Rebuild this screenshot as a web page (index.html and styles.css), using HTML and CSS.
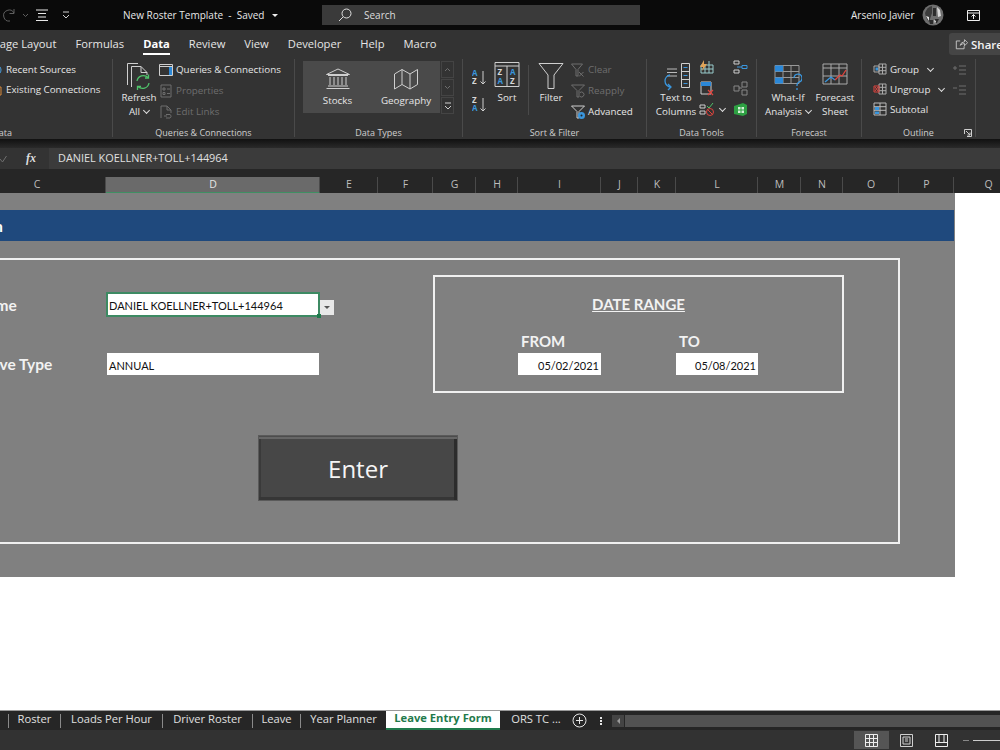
FILE: index.html
```html
<!DOCTYPE html>
<html lang="en">
<head>
  <meta charset="UTF-8">
  <meta name="viewport" content="width=device-width, initial-scale=1.0">
  <title>New Roster Template</title>
  <link rel="stylesheet" href="styles.css">
</head>

<body>
  <div class="app">
    <!-- title bar -->
    <header class="titlebar">
      <div class="quick">
        <svg class="ic dim" width="14" height="14" viewBox="0 0 14 14"><path d="M12 5A5.5 5.5 0 1 0 8 13"/><path d="M12 1v4.500H7.500"/></svg>
        <svg class="ic dim chev-1" width="7" height="5" viewBox="0 0 7 5"><path d="M1 1l2.500 2.500L6 1"/></svg>
        <svg class="ic menu-lines" width="14" height="13" viewBox="0 0 14 13"><path d="M1 1h12M3 4.500h8M3 8h8M1 11.500h12" stroke="#e8e8e8"/></svg>
        <svg class="ic chev-2" width="8" height="8" viewBox="0 0 8 8"><path d="M1 1h6M1 4l3 3 3-3"/></svg>
      </div>
      <div class="doc-name">New Roster Template&nbsp; - &nbsp;Saved<span class="caret"></span></div>
      <div class="search">
        <svg class="ic" width="14" height="14" viewBox="0 0 14 14"><circle cx="8.500" cy="5.500" r="4.500" stroke="#e0e0e0"/><path d="M5.200 8.800L1 13" stroke="#e0e0e0"/></svg>
        <span>Search</span>
      </div>
      <div class="user">Arsenio Javier</div>
      <svg class="avatar" width="22" height="22" viewBox="0 0 22 22">
        <circle cx="11" cy="11" r="10.500" fill="#6e6e6e"/>
        <path d="M3 9q2-6 7-7v7l-3 9q-3-3-4-9z" fill="#3c3c3c"/>
        <path d="M15 3l3 3 1 6-3 1z" fill="#d8d8d8"/>
        <path d="M11 4h3v8h-3zM7 16h4v4H8zM13 15h4l-2 4h-2z" fill="#2c2c2c"/>
        <path d="M4 12l3 1v4zM12 16l2 1-1 3z" fill="#e6e6e6"/>
      </svg>
      <svg class="ic restore" width="13" height="11" viewBox="0 0 13 11"><path d="M.5.500h12v10H.500zM.5 3h12M6.500 9V4.500M4.500 6.500l2-2 2 2" stroke="#eee"/></svg>
    </header>

    <!-- ribbon tabs -->
    <nav class="menu">
      <a class="menu-item">Page Layout</a>
      <a class="menu-item">Formulas</a>
      <a class="menu-item active">Data</a>
      <a class="menu-item">Review</a>
      <a class="menu-item">View</a>
      <a class="menu-item">Developer</a>
      <a class="menu-item">Help</a>
      <a class="menu-item">Macro</a>
      <div class="share">
        <svg class="ic" width="13" height="12" viewBox="0 0 15 13"><path d="M6 3H1.500v9h9V9M6 8q1-4 5-4V1.500L14.500 5 11 8.500V6q-3 0-5 2z"/></svg>
        <span>Share</span>
      </div>
    </nav>

    <!-- ribbon -->
    <section class="ribbon">
      <div class="group group-get">
        <div class="body">
          <div class="list list-tight">
            <div class="row">
              <svg class="ic" width="14" height="14" viewBox="0 0 14 14"><circle cx="7" cy="8" r="5" stroke="#4a9fe0"/></svg>
              <span>Recent Sources</span>
            </div>
            <div class="row">
              <svg class="ic" width="14" height="14" viewBox="0 0 14 14"><path d="M3 5h9v8H3zM5 5V2h5v3" stroke="#d98a3d"/></svg>
              <span>Existing Connections</span>
            </div>
          </div>
        </div>
        <div class="group-label">Get &amp; Transform Data</div>
      </div>

      <div class="group group-queries">
        <div class="body">
          <div class="big refresh">
            <svg class="ic" width="28" height="29" viewBox="0 0 28 29">
              <path d="M2.500 23V1.500H13"/>
              <path d="M6.500 25V4.500H16l6 6V13M16 4.500v6h6"/>
              <path d="M12 19a6.500 6.500 0 0 1 11-3.500M24 21a6.500 6.500 0 0 1-11 3.500" stroke="#4fc36a" stroke-width="1.300"/>
              <path d="M23.500 12.500v3.500H20M12.500 28v-3.500H16" stroke="#4fc36a" stroke-width="1.300"/>
            </svg>
            <span>Refresh</span>
            <span>All<i class="chev"></i></span>
          </div>
          <div class="list">
            <div class="row">
              <svg class="ic" width="14" height="14" viewBox="0 0 14 14"><path d="M.5 1.500h13v11H.500zM.5 3.500h13"/><path d="M10 4h3v8h-3z" fill="#2b88d8" stroke="none"/></svg>
              <span>Queries &amp; Connections</span>
            </div>
            <div class="row off">
              <svg class="ic off-ic" width="14" height="14" viewBox="0 0 14 14"><path d="M2 1h10v12H2zM4 4h2v2H4zM4 8.500h2v2H4zM8 5h3M8 9.500h3"/></svg>
              <span>Properties</span>
            </div>
            <div class="row off">
              <svg class="ic off-ic" width="14" height="14" viewBox="0 0 14 14"><path d="M2 13V1h6l4 4v3M8 1v4h4M5 11h3M7 9.500h4a2 2 0 0 1 0 3.500H7"/></svg>
              <span>Edit Links</span>
            </div>
          </div>
        </div>
        <div class="group-label">Queries &amp; Connections</div>
      </div>

      <div class="group group-types">
        <div class="body">
          <div class="gallery">
            <div class="type type-stocks">
              <svg class="ic" width="26" height="22" viewBox="0 0 26 22"><path d="M13 1L1.500 6.500h23zM3 7.500h20M5 9v8M9 9v8M13 9v8M17 9v8M21 9v8M3 18h20M1.500 20.500h23"/></svg>
              <span>Stocks</span>
            </div>
            <div class="type">
              <svg class="ic" width="26" height="22" viewBox="0 0 26 22"><path d="M1.500 6L9 1.500l8 4.500 7.500-4.500v15L17 21l-8-4.500L1.500 21zM9 1.500v15M17 6v15"/></svg>
              <span>Geography</span>
            </div>
          </div>
          <div class="scroller">
            <div class="scroll-cell"><svg class="ic off-ic" width="7" height="5" viewBox="0 0 7 5"><path d="M1 4l2.500-2.500L6 4"/></svg></div>
            <div class="scroll-cell"><svg class="ic off-ic" width="7" height="5" viewBox="0 0 7 5"><path d="M1 1l2.500 2.500L6 1"/></svg></div>
            <div class="scroll-cell"><svg class="ic" width="8" height="8" viewBox="0 0 8 8"><path d="M1 1h6M1 4l3 3 3-3"/></svg></div>
          </div>
        </div>
        <div class="group-label">Data Types</div>
      </div>

      <div class="group group-sort">
        <div class="body">
          <div class="sort-small">
            <svg class="ic" width="15" height="16" viewBox="0 0 15 16">
              <text x="0" y="7" class="letter blue-text">A</text><text x="0" y="15" class="letter">Z</text>
              <path d="M11 2v13M8.500 12.500L11 15l2.500-2.500"/>
            </svg>
            <svg class="ic" width="15" height="16" viewBox="0 0 15 16">
              <text x="0" y="7" class="letter">Z</text><text x="0" y="15" class="letter blue-text">A</text>
              <path d="M11 2v13M8.500 12.500L11 15l2.500-2.500"/>
            </svg>
          </div>
          <div class="big sort-btn">
            <svg class="ic" width="26" height="29" viewBox="0 0 26 29">
              <path d="M1 .500h24v24H1zM1 4h24M13 4v20.500"/>
              <text x="3.500" y="13" class="letter">Z</text><text x="3.500" y="22" class="letter blue-text">A</text>
              <text x="16" y="13" class="letter blue-text">A</text><text x="16" y="22" class="letter">Z</text>
            </svg>
            <span>Sort</span>
          </div>
          <div class="vline"></div>
          <div class="big filter-btn">
            <svg class="ic" width="26" height="29" viewBox="0 0 26 29"><path d="M1 1.500h24L16 13v13.500h-6V13z"/></svg>
            <span>Filter</span>
          </div>
          <div class="list">
            <div class="row off">
              <svg class="ic off-ic" width="14" height="14" viewBox="0 0 14 14"><path d="M.5 1h11L7 6.500V13H5V6.500zM8 9l4.500 4.500M12.500 9L8 13.500"/></svg>
              <span>Clear</span>
            </div>
            <div class="row off">
              <svg class="ic off-ic" width="14" height="14" viewBox="0 0 14 14"><path d="M.5 1h13L8 6.500V13H6V6.500zM9 8.500a2.500 2.500 0 1 1 0 4"/></svg>
              <span>Reapply</span>
            </div>
            <div class="row">
              <svg class="ic" width="14" height="14" viewBox="0 0 14 14"><path d="M.5 1h13L8 6.500V13H6V6.500z"/><circle cx="10.500" cy="10.500" r="3.500" fill="#3a96dd" stroke="none"/><circle cx="10.500" cy="10.500" r="1" fill="#222" stroke="none"/></svg>
              <span>Advanced</span>
            </div>
          </div>
        </div>
        <div class="group-label">Sort &amp; Filter</div>
      </div>

      <div class="group group-tools">
        <div class="body">
          <div class="big columns-btn">
            <svg class="ic" width="30" height="29" viewBox="0 0 30 29">
              <path d="M6 7h10M6 10.500h10M6 14h10" stroke="#bbb"/>
              <path d="M20.500 1.500h8v24h-8zM20.500 9.500h8M20.500 17.500h8"/>
              <path d="M22.500 5.500h4M22.500 13.500h4M22.500 21.500h4" stroke="#3a96dd"/>
              <path d="M9 13a6 6 0 0 0-5 6 6 6 0 0 0 6 6M7 22l3 3-3 3" stroke="#3a96dd" stroke-width="1.300"/>
            </svg>
            <span>Text to</span>
            <span>Columns</span>
          </div>
          <div class="tool-col">
            <svg class="ic" width="15" height="14" viewBox="0 0 15 14"><path d="M2 13V5h12v8zM6 5v8M10 1v12M2 9h12" stroke="#9cc"/><path d="M5 0L1 7h3l-1 4 5-7H5z" fill="#e0a458" stroke="none"/></svg>
            <svg class="ic" width="15" height="15" viewBox="0 0 15 15"><path d="M2 1h10v12H2z"/><path d="M2 1h10v4H2z" fill="#2b88d8" stroke="none"/><path d="M9 9l5 5M14 9l-5 5" stroke="#e0443e" stroke-width="1.300"/></svg>
            <div class="tool-row">
              <svg class="ic" width="15" height="14" viewBox="0 0 15 14"><path d="M1 3h5v3H1zM1 9h5v3H1z"/><path d="M8 4l2 2 4-5" stroke="#4fc36a"/><circle cx="11" cy="10" r="3.500" stroke="#e0443e"/><path d="M8.500 7.500l5 5" stroke="#e0443e"/></svg>
              <i class="chev chev-tool"></i>
            </div>
          </div>
          <div class="tool-col">
            <svg class="ic" width="15" height="14" viewBox="0 0 15 14"><path d="M1 1h5v3H1zM1 10h5v3H1z"/><path d="M9 5.500h5v3H9zM4 7h5" stroke="#3a96dd"/></svg>
            <svg class="ic" width="15" height="15" viewBox="0 0 15 15"><path d="M1 5h5v5H1zM9 1h5v5H9zM9 9h5v5H9zM6 7h3" stroke="#888"/></svg>
            <svg width="15" height="15" viewBox="0 0 15 15"><path d="M1 4l9-3 4 2v9l-4 2-9-2z" fill="#2ea043"/><path d="M5 5h6v6H5z" fill="#d7f0d9"/><path d="M8 5v6M5 8h6" stroke="#2ea043"/></svg>
          </div>
        </div>
        <div class="group-label">Data Tools</div>
      </div>

      <div class="group group-forecast">
        <div class="body">
          <div class="big whatif-btn">
            <svg class="ic" width="28" height="29" viewBox="0 0 28 29">
              <path d="M1 3.500h24v18H1zM1 9.500h24M1 15.500h24M9 3.500v18M17 3.500v18" stroke="#999"/>
              <path d="M1 3.500h8v6H1zM1 15.500h8v6H1z" fill="#2b88d8" stroke="none"/>
              <path d="M20 16a4 4 0 1 1 5 4q-2 1-2 3v1M23 26v2" stroke="#3a96dd" stroke-width="1.300"/>
            </svg>
            <span>What-If</span>
            <span>Analysis<i class="chev"></i></span>
          </div>
          <div class="big forecast-btn">
            <svg class="ic" width="26" height="29" viewBox="0 0 26 29">
              <path d="M1 2h24v20H1zM1 6h24M9 2v20M17 2v20M1 14h24" stroke="#aaa"/>
              <path d="M3 20l6-5 4 3" stroke="#3a96dd" stroke-width="1.300"/>
              <path d="M13 18l5-5 2 1 4-6" stroke="#e0443e" stroke-width="1.300"/>
            </svg>
            <span>Forecast</span>
            <span>Sheet</span>
          </div>
        </div>
        <div class="group-label">Forecast</div>
      </div>

      <div class="group group-outline">
        <div class="body">
          <div class="list list-tight">
            <div class="row">
              <svg class="ic" width="14" height="12" viewBox="0 0 14 12"><path d="M6 1h7v10H6zM9.500 1v10M6 4.300h7M6 7.700h7M1 3h5v6H1z" stroke="#aaa"/><path d="M2.500 4.500h2.500v3H2.500z" fill="#3a96dd" stroke="none"/></svg>
              <span>Group</span><i class="chev chev-far"></i>
            </div>
            <div class="row">
              <svg class="ic" width="14" height="12" viewBox="0 0 14 12"><path d="M6 1h7v10H6zM9.500 1v10M6 4.300h7M6 7.700h7" stroke="#aaa"/><path d="M1 3h5v6H1zM2 4l3 4M5 4L2 8" stroke="#e0443e"/></svg>
              <span>Ungroup</span><i class="chev chev-far"></i>
            </div>
            <div class="row">
              <svg class="ic" width="14" height="14" viewBox="0 0 14 14"><path d="M1 1h12v12H1zM7 1v12M1 4.700h12M1 8.300h12" stroke="#bbb"/><path d="M2 5h4v3H2zM2 9.500h4V12H2z" fill="#3a96dd" stroke="none"/></svg>
              <span>Subtotal</span>
            </div>
          </div>
          <div class="detail-col">
            <svg class="ic off-ic" width="13" height="11" viewBox="0 0 13 11"><path d="M0 3h4M2 1v4M6 1h7M6 5h7M6 9h7"/></svg>
            <svg class="ic off-ic" width="13" height="11" viewBox="0 0 13 11"><path d="M0 3h4M6 1h7M6 5h7M6 9h7"/></svg>
          </div>
        </div>
        <div class="group-label">Outline
          <svg class="ic launcher" width="8" height="8" viewBox="0 0 8 8"><path d="M.5 5V.500H7.500V7.500H3M2 2l4 4M6 3.500V6H3.500"/></svg>
        </div>
      </div>
    </section>

    <div class="ribbon-gap"></div>

    <!-- formula bar -->
    <div class="formula">
      <div class="formula-btns">
        <svg class="ic off-ic" width="7" height="8" viewBox="0 0 7 8"><path d="M0 4l2.500 3L6.500 1"/></svg>
        <span class="fx">fx</span>
      </div>
      <div class="formula-input">DANIEL KOELLNER+TOLL+144964</div>
    </div>

    <!-- column letters -->
    <div class="cols">
      <div class="col">C</div>
      <div class="col selected">D</div>
      <div class="col">E</div>
      <div class="col">F</div>
      <div class="col">G</div>
      <div class="col">H</div>
      <div class="col">I</div>
      <div class="col">J</div>
      <div class="col">K</div>
      <div class="col">L</div>
      <div class="col">M</div>
      <div class="col">N</div>
      <div class="col">O</div>
      <div class="col">P</div>
      <div class="col col-last">Q</div>
    </div>

    <!-- worksheet, placed on the same columns as the letters above -->
    <main class="sheet-area">
      <div class="sheet">
        <div class="banner">Leave Form</div>
        <div class="frame"></div>
        <div class="field-label label-name">Name</div>
        <div class="cell-input input-name">DANIEL KOELLNER+TOLL+144964<span class="fill-handle"></span></div>
        <div class="dropdown"><span class="caret caret-dark"></span></div>
        <div class="field-label label-type">Leave Type</div>
        <div class="cell-input input-type">ANNUAL</div>

        <div class="date-box"></div>
        <div class="date-title">DATE RANGE</div>
        <div class="date-label label-from">FROM</div>
        <div class="date-label label-to">TO</div>
        <div class="cell-input date-input input-from">05/02/2021</div>
        <div class="cell-input date-input input-to">05/08/2021</div>

        <div class="enter">Enter</div>
      </div>
    </main>

    <!-- sheet tabs -->
    <div class="tabs">
      <a class="tab tab-roster">Roster</a>
      <a class="tab tab-loads">Loads Per Hour</a>
      <a class="tab tab-driver">Driver Roster</a>
      <a class="tab tab-leave">Leave</a>
      <a class="tab tab-year">Year Planner</a>
      <a class="tab tab-active">Leave Entry Form</a>
      <a class="tab tab-more">ORS TC ...</a>
      <svg class="ic add-sheet" width="15" height="15" viewBox="0 0 15 15"><circle cx="7.500" cy="7.500" r="6.500" stroke="#e6e6e6"/><path d="M7.500 4v7M4 7.500h7" stroke="#e6e6e6"/></svg>
      <div class="kebab"><i></i><i></i><i></i></div>
      <div class="hscroll">
        <div class="hscroll-btn"><span class="arrow-left"></span></div>
        <div class="hscroll-track"></div>
      </div>
    </div>

    <!-- status bar -->
    <footer class="status">
      <div class="view-btn view-on">
        <svg class="ic" width="13" height="13" viewBox="0 0 13 13"><path d="M.5.500h12v12H.500zM4.500.500v12M8.500.500v12M.5 4.500h12M.5 8.500h12" stroke="#eee"/></svg>
      </div>
      <div class="view-btn">
        <svg class="ic" width="13" height="13" viewBox="0 0 13 13"><path d="M.5.500h12v12H.500zM3 3h7v7H3zM5 5h3M5 7h3"/></svg>
      </div>
      <div class="view-btn">
        <svg class="ic" width="13" height="13" viewBox="0 0 13 13"><path d="M.5.500h12v12H.500zM.5 8.500h12M4 .500V8.500M9 .500V8.500" stroke="#eee"/></svg>
      </div>
      <div class="zoom-slider"><i class="minus"></i><i class="track"></i></div>
    </footer>
  </div>
</body>

</html>
```

FILE: styles.css
```css
*{margin: 0; padding: 0; box-sizing: border-box;}
html, body{height: 100%; overflow: hidden;}
body{background-color: #fff; font-family: "Open Sans", "Noto Sans", sans-serif; color: #e6e6e6;}
a{text-decoration: none;}
i{font-style: normal;}

.app{
  width: 1000px;
  height: 750px;
  display: flex;
  flex-direction: column;
  overflow: hidden;
}

/*icons*/
.ic{fill: none; stroke: #cfcfcf; stroke-width: 1; flex: none;}
.off-ic{stroke: #6e6e6e;}
.dim{stroke: #5f5f5f;}
.letter{font: bold 8px "Open Sans", sans-serif; fill: #d8d8d8; stroke: none;}
.blue-text{fill: #3a96dd;}

.chev{
  display: inline-block;
  width: 5px;
  height: 5px;
  margin: 0 0 2px 4px;
  border-right: 1px solid #ddd;
  border-bottom: 1px solid #ddd;
  transform: rotate(45deg);
}

.caret{
  display: inline-block;
  margin-left: 8px;
  border-left: 3px solid transparent;
  border-right: 3px solid transparent;
  border-top: 3px solid #eee;
  vertical-align: 2px;
}

/*title bar*/
.titlebar{
  height: 30px;
  background-color: #0a0a0a;
  display: flex;
  align-items: center;
  flex: none;
  font-size: 10px;
}
.quick{width: 123px; display: flex; align-items: center; padding-left: 2px; flex: none;}
.chev-1{margin-left: 6px;}
.menu-lines{margin-left: 6px;}
.chev-2{margin-left: 13px;}
.doc-name{width: 199px; flex: none; color: #e8e8e8;}
.search{
  width: 318px;
  height: 20px;
  background-color: #3a3a3a;
  display: flex;
  align-items: center;
  padding-left: 16px;
  gap: 12px;
  flex: none;
  color: #ddd;
}
.user{margin-left: 211px; width: 71px; flex: none; color: #e8e8e8;}
.avatar{flex: none;}
.restore{margin-left: 23px;}

/*ribbon tabs*/
.menu{
  height: 28px;
  background-color: #333;
  display: flex;
  align-items: center;
  gap: 19px;
  margin-left: -7px;
  font-size: 11.200px;
  flex: none;
  position: relative;
}
.menu-item{color: #e6e6e6; height: 28px; line-height: 27px; white-space: nowrap;}
.menu-item.active{
  color: #fff;
  font-weight: 700;
  position: relative;
}
.menu-item.active::after{
  content: "";
  position: absolute;
  left: 0;
  right: 0;
  bottom: 3px;
  height: 2px;
  background-color: #fff;
}
.share{
  margin-left: auto;
  margin-right: -7px;
  width: 58px;
  height: 22px;
  background-color: #454545;
  border-radius: 3px 0 0 3px;
  display: flex;
  align-items: center;
  gap: 3px;
  padding-left: 6px;
  font-weight: 600;
  font-size: 11.500px;
  color: #f2f2f2;
  overflow: hidden;
}

/*ribbon*/
.ribbon{
  height: 81px;
  background-color: #333;
  display: flex;
  font-size: 9.800px;
  flex: none;
  padding-top: 1px;
}
.group{
  height: 78px;
  border-right: 1px solid #4a4a4a;
  display: flex;
  flex-direction: column;
  flex: none;
}
.body{height: 67px; display: flex; flex: none;}
.group-label{
  position: relative;
  text-align: center;
  font-size: 9px;
  line-height: 14px;
  color: #cfcfcf;
}
.launcher{position: absolute; right: 3px; top: 3px;}

.group-get{width: 293px; margin-left: -180px;}
.group-get .body{padding-left: 169px;}
.group-queries{width: 182px;}
.group-queries .body{padding-left: 6px;}
.group-types{width: 168px;}
.group-types .body{padding-left: 8px;}
.group-sort{width: 184px;}
.group-sort .body{padding-left: 9px;}
.group-tools{width: 110px;}
.group-tools .body{padding-left: 6px;}
.group-forecast{width: 105px;}
.group-forecast .body{padding-left: 6px;}
.group-outline{width: 114px;}
.group-outline .body{padding-left: 11px;}

.big{
  display: flex;
  flex-direction: column;
  align-items: center;
  padding-top: 3px;
  line-height: 14px;
  white-space: nowrap;
  flex: none;
}
.big svg{display: block;}
.refresh{width: 40px;}
.list{display: flex; flex-direction: column; flex: none;}
.row{height: 21px; display: flex; align-items: center; gap: 3px; white-space: nowrap;}
.list-tight .row{height: 20px;}
.off{color: #6e6e6e;}

.gallery{
  width: 137px;
  height: 52px;
  margin-top: 2px;
  background-color: #4a4a4a;
  display: flex;
  flex: none;
}
.type{
  width: 68px;
  display: flex;
  flex-direction: column;
  align-items: center;
  padding-top: 7px;
  gap: 4px;
  line-height: 14px;
}
.type-stocks{width: 69px;}
.scroller{margin: 2px 0 0 1px; display: flex; flex-direction: column; gap: 1px; flex: none;}
.scroll-cell{
  width: 13px;
  height: 17px;
  border: 1px solid #444;
  display: flex;
  align-items: center;
  justify-content: center;
}

.sort-small{width: 20px; padding-top: 10px; display: flex; flex-direction: column; gap: 11px; flex: none;}
.sort-btn{width: 30px;}
.vline{width: 1px; height: 50px; margin: 6px 7px 0 6px; background-color: #4a4a4a; flex: none;}
.filter-btn{width: 30px; margin-right: 5px;}

.columns-btn{width: 46px;}
.tool-col{width: 34px; padding-top: 1px; display: flex; flex-direction: column; gap: 6.500px; flex: none;}
.tool-row{display: flex; align-items: center;}
.chev-tool{margin-left: 6px;}
.whatif-btn{width: 50px;}
.forecast-btn{width: 44px;}
.chev-far{margin-left: 6px;}
.group-outline .list{width: 80px;}
.detail-col{padding-top: 6px; display: flex; flex-direction: column; gap: 9px;}

.ribbon-gap{height: 9px; flex: none; background: linear-gradient(#111, #2a2a2a);}

/*formula bar*/
.formula{
  height: 21px;
  display: flex;
  background-color: #333;
  font-size: 10.900px;
  flex: none;
}
.formula-btns{width: 49px; display: flex; align-items: center; justify-content: space-between; padding-right: 13px; flex: none;}
.fx{font: italic bold 12px "Liberation Serif", serif; color: #ddd;}
.formula-input{
  flex: 1;
  background-color: #3b3b3b;
  line-height: 20px;
  padding-left: 9px;
  color: #e0e0e0;
}

/*column letters*/
.cols,
.sheet{
  display: grid;
  grid-template-columns: 138px 214px 58px 55px 43px 42px 83px 37px 38px 82px 43px 42px 56px 55px;
  margin-left: -32px;
}
.cols{
  grid-template-columns: 138px 214px 58px 55px 43px 42px 83px 37px 38px 82px 43px 42px 56px 55px 68px;
  height: 24px;
  padding-top: 8px;
  background-color: #262626;
  font-size: 10.500px;
  flex: none;
}
.col{
  text-align: center;
  line-height: 15px;
  padding-left: 1px;
  color: #bdbdbd;
  border-right: 1px solid #4a4a4a;
  border-bottom: 1px solid #8c8c8c;
}
.col-last{border-right: 0;}
.selected{
  background-color: #6a6a6a;
  color: #e6e6e6;
  border-bottom: 2px solid #3f8f63;
}

/*worksheet*/
.sheet-area{flex: 1; background-color: #fff; overflow: hidden;}
.sheet{
  width: 987px;
  height: 384px;
  grid-template-rows: 17px 31px 17px 18px 16px 25px 36px 22px 17px 43px 66px 42px 34px;
  background-color: #808080;
  font-family: Lato, "Open Sans", sans-serif;
}
.banner{
  grid-column: 1 / 15;
  grid-row: 2;
  background-color: #1f497d;
  color: #fff;
  font-weight: 700;
  font-size: 16px;
  line-height: 31px;
  text-indent: -47px;
  white-space: nowrap;
  overflow: hidden;
}
.frame{grid-column: 1 / 14; grid-row: 4 / 13; margin: 0 -1px -1px 0; border: 2px solid #f0f0f0; border-left: 0;}
.date-box{grid-column: 5 / 13; grid-row: 5 / 10; margin: -1px -1px -1px 0; border: 2px solid #f0f0f0;}

.field-label{
  grid-column: 1;
  padding-left: 8px;
  align-self: center;
  color: #f2f2f2;
  font-size: 15.500px;
  font-weight: 700;
}
.label-name{grid-row: 6;}
.label-type{grid-row: 8;}

.cell-input{
  background-color: #fff;
  color: #111;
  font-size: 11px;
  line-height: 22px;
  padding-left: 3px;
  white-space: nowrap;
  position: relative;
}
.input-name{
  grid-column: 2;
  grid-row: 6;
  border: 2px solid #3d8a63;
  padding: 2px 0 0 1px;
  line-height: 20px;
}
.fill-handle{
  position: absolute;
  right: -3px;
  bottom: -3px;
  width: 4px;
  height: 4px;
  background-color: #1f7a4c;
}
.input-type{grid-column: 2; grid-row: 8; margin: 0 1px; padding-left: 2px; line-height: 26px;}

.dropdown{
  grid-column: 3;
  grid-row: 6;
  width: 14px;
  height: 15px;
  margin-top: 8px;
  background-color: #e8e8e8;
  display: flex;
  align-items: center;
  justify-content: center;
}
.caret-dark{margin: 0; border-top-color: #555;}

.date-title{
  grid-column: 5 / 13;
  grid-row: 6;
  padding-left: 1px;
  text-align: center;
  color: #f2f2f2;
  font-size: 15px;
  font-weight: 700;
  line-height: 25px;
  text-decoration: underline;
}
.date-label{
  grid-row: 7;
  align-self: end;
  padding-left: 3px;
  margin-bottom: 3px;
  color: #f2f2f2;
  font-size: 15px;
  font-weight: 700;
}
.label-from{grid-column: 7;}
.label-to{grid-column: 10;}
.date-input{grid-row: 8; text-align: right; padding-right: 2px; line-height: 26px;}
.input-from{grid-column: 7;}
.input-to{grid-column: 10;}

.enter{
  grid-column: 2 / 6;
  grid-row: 11;
  width: 200px;
  margin-left: 152px;
  background-color: #474747;
  border: 1px solid #5a5a5a;
  box-shadow: inset 0 1px 0 #4c4c4c, inset 0 3px 0 #666, inset -3px 0 0 #2c2c2c, inset 0 -3px 0 #363636, inset 2px 0 0 #3a3a3a;
  color: #f5f5f5;
  font-family: "Open Sans", sans-serif;
  font-size: 24px;
  line-height: 66px;
  text-align: center;
}

/*sheet tabs*/
.tabs{
  height: 20px;
  background-color: #262626;
  border-top: 1px solid #9a9a9a;
  display: flex;
  align-items: center;
  padding-left: 8px;
  font-size: 11.200px;
  flex: none;
}
.tab{
  height: 14px;
  line-height: 10px;
  text-align: center;
  border-left: 1px solid #8a8a8a;
  color: #e0e0e0;
  white-space: nowrap;
  flex: none;
}
.tab-roster{width: 52px;}
.tab-loads{width: 102px;}
.tab-driver{width: 90px;}
.tab-leave{width: 48px;}
.tab-year{width: 86px;}
.tab-active{
  width: 114px;
  height: 19px;
  line-height: 14px;
  background-color: #fff;
  border-left: 0;
  border-bottom: 2px solid #1f7a4c;
  color: #1f7a4c;
  font-weight: 700;
}
.tab-more{width: 72px; border-left: 0;}
.add-sheet{margin-left: 0;}
.kebab{margin-left: 13px; display: flex; flex-direction: column; gap: 1px;}
.kebab i{width: 2px; height: 2px; background-color: #e6e6e6;}
.hscroll{margin-left: 10px; flex: 1; height: 12px; display: flex; gap: 1px;}
.hscroll-btn{width: 12px; background-color: #444; display: flex; align-items: center; justify-content: center;}
.arrow-left{
  border-top: 3px solid transparent;
  border-bottom: 3px solid transparent;
  border-right: 3px solid #999;
}
.hscroll-track{flex: 1; background-color: #525252;}

/*status bar*/
.status{
  height: 20px;
  background-color: #323232;
  display: flex;
  align-items: center;
  justify-content: flex-end;
  flex: none;
}
.view-btn{width: 35px; height: 18px; display: flex; align-items: center; justify-content: center;}
.view-on{background-color: #555;}
.zoom-slider{width: 41px; padding-left: 4px; display: flex; align-items: center; gap: 4px; flex: none;}
.minus{width: 6px; height: 1px; background-color: #888;}
.track{flex: 1; height: 1px; background-color: #ccc;}
```
